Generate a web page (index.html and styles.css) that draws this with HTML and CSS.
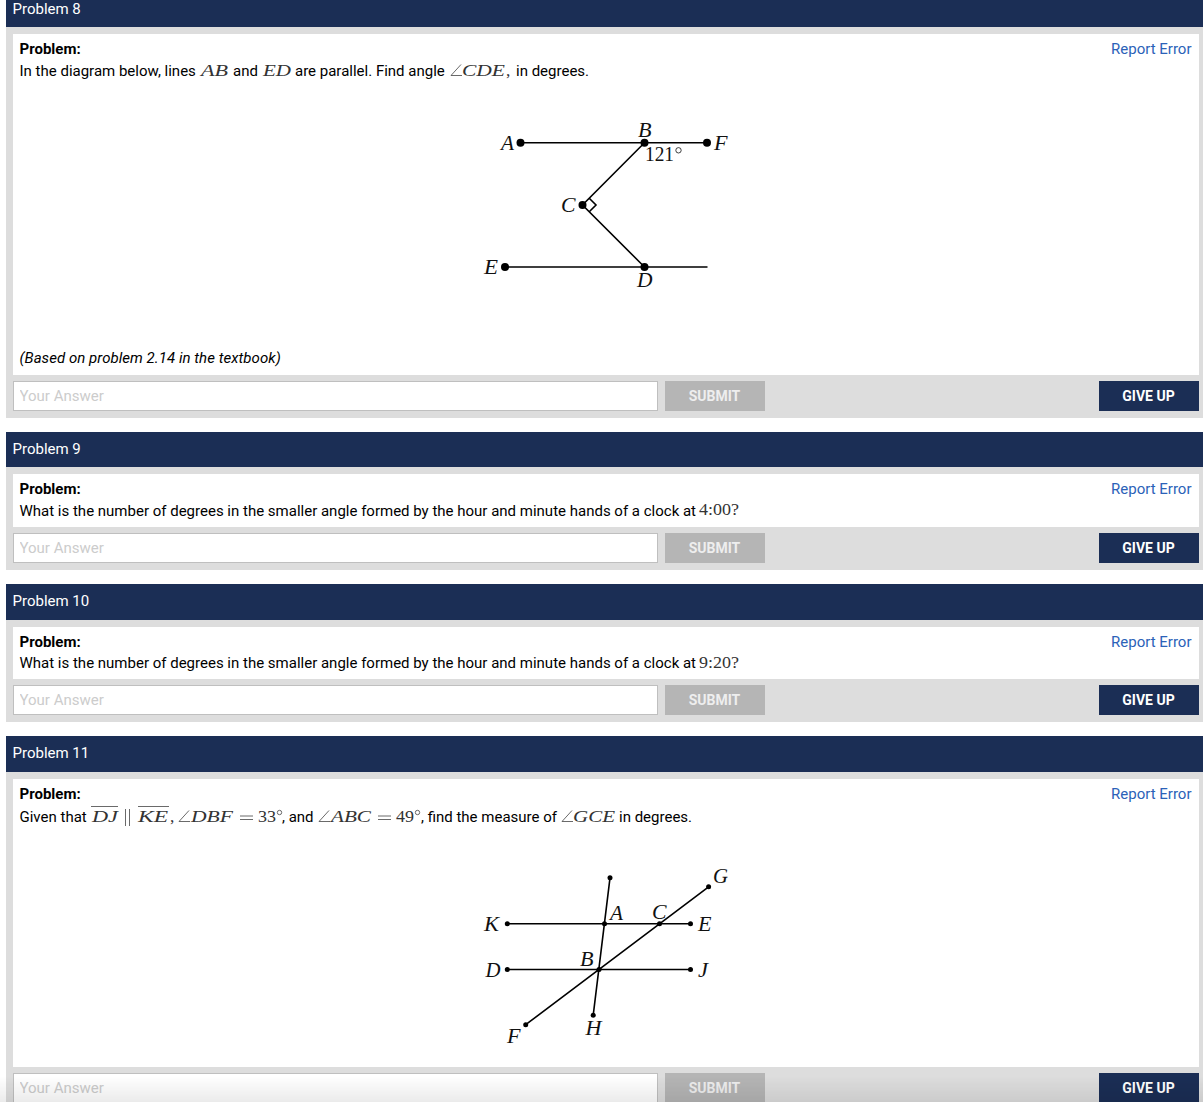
FILE: index.html
```html
<!DOCTYPE html>
<html lang="en">
<head>
<meta charset="utf-8">
<title>Problems</title>
<link rel="stylesheet" href="styles.css">
</head>
<body>
<main class="problems">
  <section class="problem">
    <h2 class="title title-cut">Problem 8</h2>
    <div class="body">
      <div class="card card-8">
        <div class="card-head"><b>Problem:</b><a class="report">Report Error</a></div>
        <p class="text"><span class="run" style="width:181.5px">In the diagram below, lines</span><svg class="math" width="32" height="14"><text x="0" y="14" textLength="27" lengthAdjust="spacingAndGlyphs">AB</text></svg><span class="run" style="width:30px">and</span><svg class="math" width="32" height="14"><text x="0" y="14" textLength="28" lengthAdjust="spacingAndGlyphs">ED</text></svg><span class="run" style="width:155px">are parallel. Find angle</span><svg class="math" width="66" height="14"><path d="M11 2.5 1 13.5H12"/><text x="12" y="14" textLength="43" lengthAdjust="spacingAndGlyphs">CDE</text><text class="up" x="56" y="14">,</text></svg><span class="run">in degrees.</span></p>
        <svg class="diagram diagram-8" width="244" height="172" viewBox="484 120 244 172">
          <path d="M520.5 142.7H707M505 267H707.5M644.5 142.7 582.5 205 644.5 267M589.5 198.5 596 205 589.5 211.5"/>
          <circle cx="520.5" cy="142.7" r="4"/><circle cx="644.5" cy="142.7" r="4"/><circle cx="707" cy="142.7" r="4"/><circle cx="582.5" cy="205" r="4"/><circle cx="505" cy="267" r="4"/><circle cx="644.5" cy="267" r="4"/>
          <text x="501" y="149.5" textLength="13" lengthAdjust="spacingAndGlyphs">A</text><text x="638" y="136.5" textLength="13.5" lengthAdjust="spacingAndGlyphs">B</text><text x="714" y="149.5" textLength="13.5" lengthAdjust="spacingAndGlyphs">F</text><text x="561" y="211.5" textLength="14.5" lengthAdjust="spacingAndGlyphs">C</text><text x="484" y="274" textLength="14" lengthAdjust="spacingAndGlyphs">E</text><text x="637" y="287" textLength="15.5" lengthAdjust="spacingAndGlyphs">D</text>
          <text class="up" x="645" y="161" textLength="29" lengthAdjust="spacingAndGlyphs">121</text><circle class="degree" cx="678.5" cy="150.3" r="2.7"/>
        </svg>
        <p class="note">(Based on problem 2.14 in the textbook)</p>
      </div>
      <div class="actions"><input class="answer" placeholder="Your Answer"><button class="btn submit">SUBMIT</button><button class="btn give">GIVE UP</button></div>
    </div>
  </section>
  <section class="problem">
    <h2 class="title">Problem 9</h2>
    <div class="body">
      <div class="card card-9">
        <div class="card-head"><b>Problem:</b><a class="report">Report Error</a></div>
        <p class="text"><span class="run" style="width:679.5px">What is the number of degrees in the smaller angle formed by the hour and minute hands of a clock at</span><svg class="math" width="41" height="14"><text class="up" x="0" y="13" textLength="40" lengthAdjust="spacingAndGlyphs">4:00?</text></svg></p>
      </div>
      <div class="actions"><input class="answer" placeholder="Your Answer"><button class="btn submit">SUBMIT</button><button class="btn give">GIVE UP</button></div>
    </div>
  </section>
  <section class="problem">
    <h2 class="title title-tall">Problem 10</h2>
    <div class="body">
      <div class="card card-10">
        <div class="card-head head-tight"><b>Problem:</b><a class="report">Report Error</a></div>
        <p class="text"><span class="run" style="width:679.5px">What is the number of degrees in the smaller angle formed by the hour and minute hands of a clock at</span><svg class="math" width="41" height="14"><text class="up" x="0" y="14" textLength="40" lengthAdjust="spacingAndGlyphs">9:20?</text></svg></p>
      </div>
      <div class="actions"><input class="answer" placeholder="Your Answer"><button class="btn submit">SUBMIT</button><button class="btn give">GIVE UP</button></div>
    </div>
  </section>
  <section class="problem">
    <h2 class="title title-tall">Problem 11</h2>
    <div class="body">
      <div class="card card-11">
        <div class="card-head"><b>Problem:</b><a class="report">Report Error</a></div>
        <p class="text text-11"><span class="run" style="width:71.5px">Given that</span><svg class="math" width="191" height="14"><path d="M0 -1.5H27M47 -1.5H78M34.5 1V18M38.5 1V18M98 2.5 88 13.5H99M149 8H162M149 11.5H162"/><text x="1" y="14" textLength="26" lengthAdjust="spacingAndGlyphs">DJ</text><text x="47" y="14" textLength="30" lengthAdjust="spacingAndGlyphs">KE</text><text class="up" x="79" y="14">,</text><text x="100" y="14" textLength="42" lengthAdjust="spacingAndGlyphs">DBF</text><text class="up" x="167" y="14" textLength="18" lengthAdjust="spacingAndGlyphs">33</text><circle cx="188.5" cy="4.5" r="2.2"/></svg><span class="run" style="width:36px">, and</span><svg class="math" width="103" height="14"><path d="M11 2.5 1 13.5H12M60 8H73M60 11.5H73"/><text x="13" y="14" textLength="40" lengthAdjust="spacingAndGlyphs">ABC</text><text class="up" x="78" y="14" textLength="18" lengthAdjust="spacingAndGlyphs">49</text><circle cx="99.5" cy="4.5" r="2.2"/></svg><span class="run" style="width:140px">, find the measure of</span><svg class="math" width="58" height="14"><path d="M11 2.5 1 13.5H12"/><text x="12" y="14" textLength="42" lengthAdjust="spacingAndGlyphs">GCE</text></svg><span class="run">in degrees.</span></p>
        <svg class="diagram diagram-11" width="244" height="180" viewBox="484 866 244 180">
          <path d="M507.3 923.7H690.5M507.3 969.5H690.5M610 877.8 593.2 1015.3M525.7 1024.7 708.6 886.8"/>
          <circle cx="507.3" cy="923.7" r="2.5"/><circle cx="604.5" cy="923.7" r="2.5"/><circle cx="659.5" cy="923.7" r="2.5"/><circle cx="690.5" cy="923.7" r="2.5"/><circle cx="507.3" cy="969.5" r="2.5"/><circle cx="599" cy="969.5" r="2.5"/><circle cx="690.5" cy="969.5" r="2.5"/><circle cx="610" cy="877.8" r="2.5"/><circle cx="593.2" cy="1015.3" r="2.5"/><circle cx="525.7" cy="1024.7" r="2.5"/><circle cx="708.6" cy="886.8" r="2.5"/>
          <text x="484" y="931" textLength="15" lengthAdjust="spacingAndGlyphs">K</text><text x="610" y="920" textLength="13" lengthAdjust="spacingAndGlyphs">A</text><text x="652" y="919" textLength="14.5" lengthAdjust="spacingAndGlyphs">C</text><text x="698" y="931" textLength="13.5" lengthAdjust="spacingAndGlyphs">E</text><text x="485.500" y="977" textLength="15" lengthAdjust="spacingAndGlyphs">D</text><text x="580" y="966" textLength="13.5" lengthAdjust="spacingAndGlyphs">B</text><text x="698" y="977" textLength="10" lengthAdjust="spacingAndGlyphs">J</text><text x="507" y="1043" textLength="13.5" lengthAdjust="spacingAndGlyphs">F</text><text x="585.5" y="1035" textLength="16" lengthAdjust="spacingAndGlyphs">H</text><text x="713" y="883" textLength="15" lengthAdjust="spacingAndGlyphs">G</text>
        </svg>
      </div>
      <div class="actions"><input class="answer" placeholder="Your Answer"><button class="btn submit">SUBMIT</button><button class="btn give">GIVE UP</button></div>
    </div>
  </section>
</main>
<div class="fade"></div>
</body>
</html>
```
FILE: styles.css
```css
* { box-sizing: border-box; }
body {
  margin: 0;
  height: 1102px;
  overflow: hidden;
  background: #fff;
  color: #000;
  font: 15px/22px Roboto, sans-serif;
}
.problems {
  display: flex;
  flex-direction: column;
  gap: 14px;
  padding-left: 6px;
}
.title {
  margin: 0;
  height: 35px;
  padding: 6px 6.5px 0;
  background: #1b2e55;
  color: #fff;
  font-size: 15px;
  font-weight: 400;
  line-height: 22px;
}
.title-cut { height: 27px; padding-top: 0; line-height: 18px; }
.title-tall { height: 36px; }
.body {
  padding: 7px 4px 7px 7px;
  background: #ddd;
}
.card {
  padding: 4px 7.5px 0 6.5px;
  background: #fff;
}
.card-8 { height: 341px; }
.card-9 { height: 53px; }
.card-10 { height: 52px; }
.card-11 { height: 288px; }
.card-head { display: flex; justify-content: space-between; height: 22px; }
.head-tight { height: 21px; }
.card-head b { font-weight: 700; }
.report { color: #2b62b8; }
.text { margin: 0; height: 22px; display: flex; align-items: baseline; white-space: nowrap; }
.text-11 { padding-top: 1px; }
.run { flex: none; }
.math { flex: none; overflow: visible; }
.math text, .diagram text {
  font-family: "Liberation Serif", serif;
  font-style: italic;
}
.math text { font-size: 17.5px; fill: #333; }
.math .up, .diagram .up { font-style: normal; }
.math path, .math circle { fill: none; stroke: #444; stroke-width: 0.8; }
.diagram { display: block; margin: 0 auto; overflow: visible; }
.diagram-8 { position: relative; left: 0.5px; margin-top: 38px; }
.diagram-11 { position: relative; left: 0.5px; margin-top: 39px; }
.diagram text { font-size: 20px; fill: #111; }
.diagram path { fill: none; stroke: #000; stroke-width: 1.6; }
.diagram .degree { fill: none; stroke: #111; stroke-width: 0.8; }
.note { margin: 55px 0 0; font-style: italic; letter-spacing: 0.05px; }
.actions { display: flex; gap: 7px; padding-top: 6px; }
.answer {
  width: 645px;
  height: 30px;
  margin: 0;
  padding: 0 5.5px;
  border: 1px solid #bfbfbf;
  border-radius: 0;
  background: #fff;
  font: 15px Roboto, sans-serif;
}
.answer::placeholder { color: #ccc; opacity: 1; }
.btn {
  width: 100px;
  height: 30px;
  padding: 0 1px 0 0;
  border: 0;
  color: #fff;
  font: 700 14px Roboto, sans-serif;
}
.submit { background: #b5b5b5; color: #eee; }
.give { margin-left: auto; background: #1b2e55; }
.fade {
  position: fixed;
  inset: auto 0 0;
  height: 26px;
  background: linear-gradient(rgba(0, 0, 0, 0), rgba(0, 0, 0, 0.08));
  pointer-events: none;
}
```
